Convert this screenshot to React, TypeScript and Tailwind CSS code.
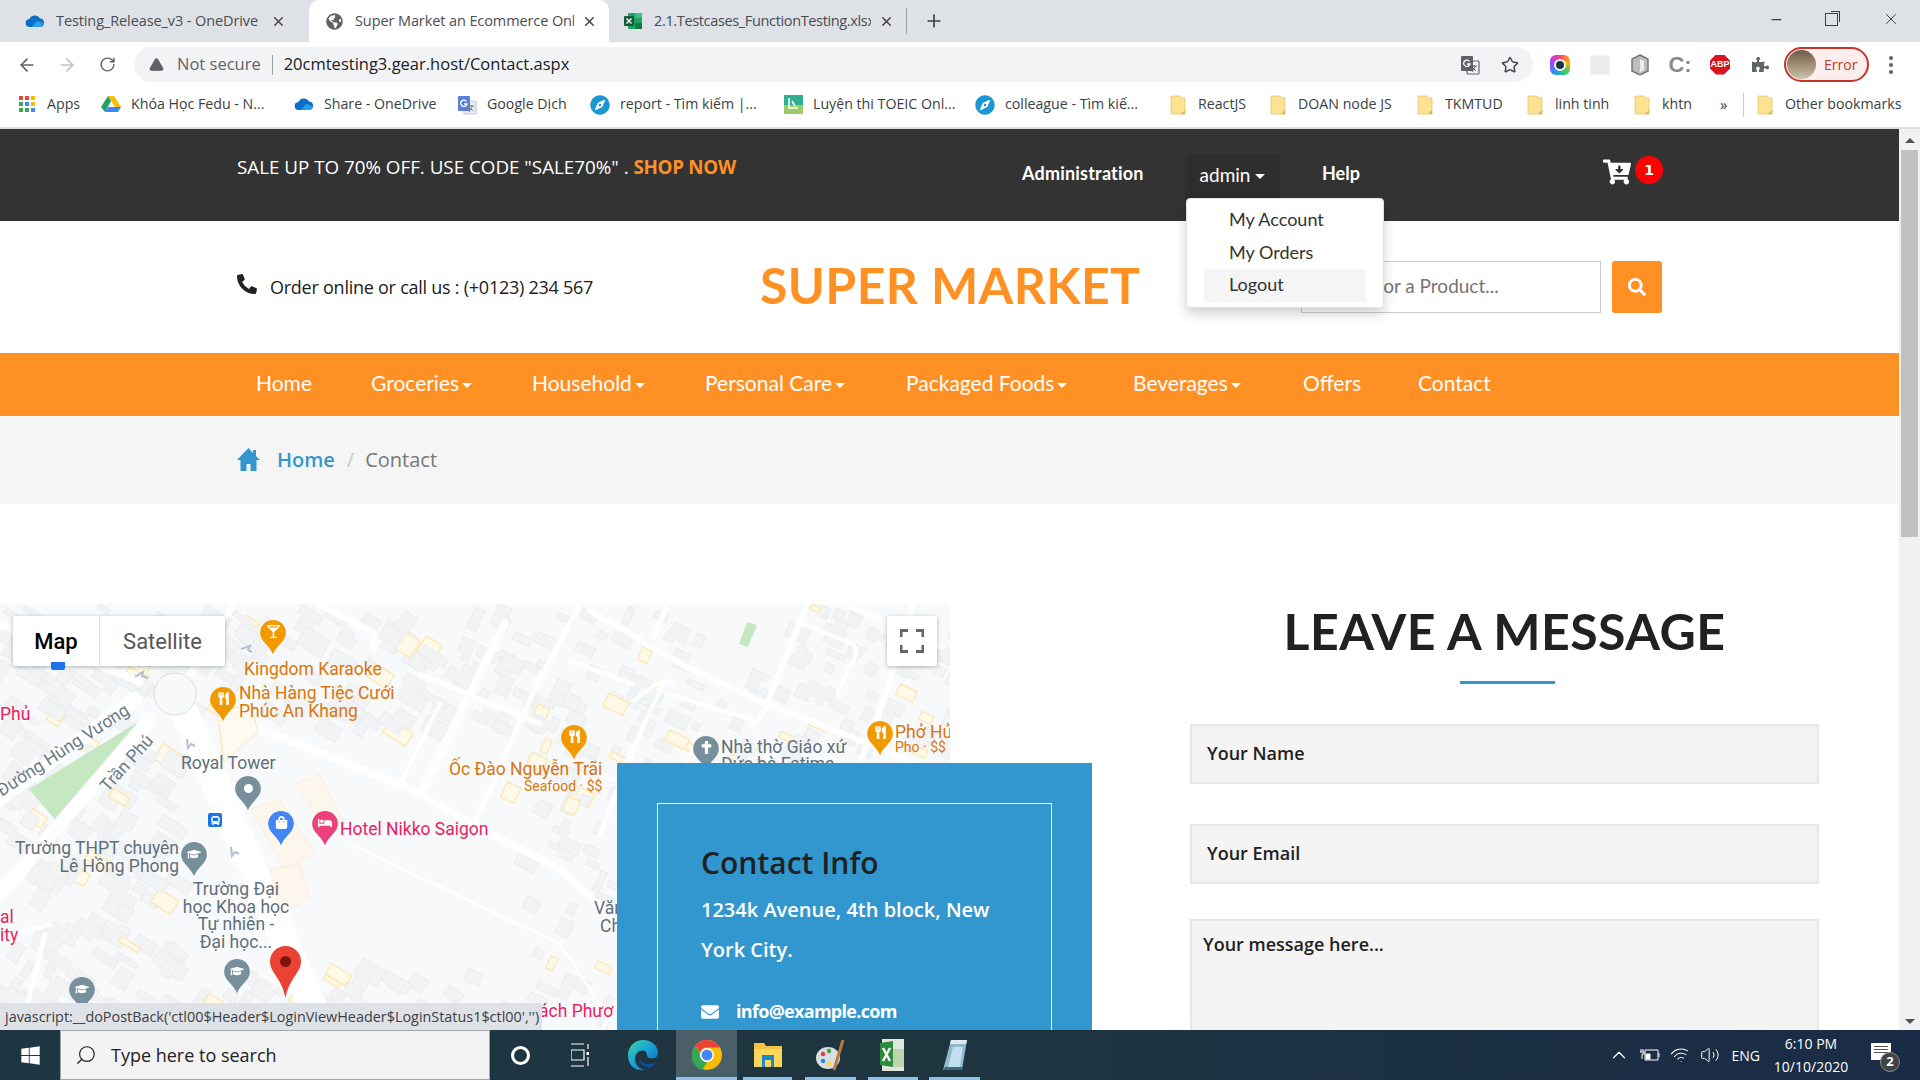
import React from "react";
import { ArrowLeft, ArrowRight, RotateCw, X, Plus, Star, Minus, AlertTriangle, ChevronUp, Search, Volume2, Wifi } from "lucide-react";
import { FaCartArrowDown, FaSearch, FaEnvelope, FaPuzzlePiece, FaWindows, FaGlobeAmericas, FaCompass, FaPhoneAlt, FaGraduationCap, FaUtensils, FaGlassMartiniAlt, FaBed, FaShoppingBag, FaCross, FaBus } from "react-icons/fa";

const Cloud = () => (
  <svg width="20" height="14" viewBox="0 0 20 14"><path d="M5 13a4 4 0 0 1-.6-8A6 6 0 0 1 15 4.500a4.300 4.300 0 0 1 .6 8.500z" fill="#0b6fc9" /><path d="M7 13l5-6 6 2a4 4 0 0 1-2.500 4z" fill="#2a9fe8" /></svg>
);
const Folder = () => (
  <svg width="16" height="20" viewBox="0 0 16 20"><path d="M1 1h9l1 2h4v16H1z" fill="#fde293" stroke="#e9c46a" strokeWidth="0.8" /><path d="M11 19l4-4v4z" fill="#e3b341" /></svg>
);
const Apps = () => (
  <svg width="16" height="16" viewBox="0 0 16 16">
    {["#ea4335","#ea4335","#fbbc04","#34a853","#4285f4","#fbbc04","#34a853","#34a853","#4285f4"].map((c, i) => (
      <rect key={i} x={(i % 3) * 6} y={Math.floor(i / 3) * 6} width="4" height="4" fill={c} />
    ))}
  </svg>
);
const Drive = () => (
  <svg width="20" height="18" viewBox="0 0 20 18"><path d="M7 1h6l7 11h-6z" fill="#fbbc04" /><path d="M7 1l3 5-6 11-4-5z" fill="#1fa463" /><path d="M4 17l3-5h13l-3 5z" fill="#4285f4" /></svg>
);
const Translate = ({ dark }: { dark?: boolean }) => (
  <svg width="20" height="20" viewBox="0 0 20 20"><rect x="7" y="6" width="12" height="13" rx="1" fill={dark ? "#f1f3f4" : "#e8eaed"} stroke={dark ? "#5f6368" : "#c7cbd1"} strokeWidth="1.200" /><rect x="1" y="1" width="12" height="15" rx="1" fill={dark ? "#5f6368" : "#5b7fd6"} /><path d="M9.500 6.500A3.200 3.200 0 1 0 10 9H7" stroke="#fff" strokeWidth="1.300" fill="none" /><path d="M11 11h6M14 10v1M12 17l3.500-6M13 13l3 3" stroke={dark ? "#5f6368" : "#7a7f87"} strokeWidth="1" fill="none" /></svg>
);
const Compass = () => <FaCompass className="text-[#1d97d4]" size={20} />;
const Toeic = () => (
  <svg width="19" height="19" viewBox="0 0 19 19"><rect width="19" height="19" fill="#2fb08f" /><rect y="10" width="19" height="9" fill="#9ccc65" /><path d="M5 3v10h9M8 6l3 5" stroke="#fff" strokeWidth="1.600" fill="none" /></svg>
);
const Excel = ({ s = 20 }: { s?: number }) => (
  <svg width={s} height={s} viewBox="0 0 20 20"><rect x="5" y="2" width="14" height="16" rx="1" fill="#21a366" /><rect x="12" y="2" width="7" height="5" fill="#33c481" /><rect x="12" y="12" width="7" height="6" fill="#107c41" /><rect x="1" y="5" width="10" height="10" rx="1" fill="#185c37" /><path d="M3.500 7.500l5 5M8.500 7.500l-5 5" stroke="#fff" strokeWidth="1.400" /></svg>
);
const ChromeLogo = ({ s = 30 }: { s?: number }) => (
  <svg width={s} height={s} viewBox="0 0 32 32"><circle cx="16" cy="16" r="16" fill="#fbbc04" /><path d="M16 0a16 16 0 0 1 13.900 8H16a8 8 0 0 0-7.500 5.200L3.600 5.800A16 16 0 0 1 16 0z" fill="#ea4335" /><path d="M3.600 5.800l7.300 12.600a6 6 0 0 0 5 5.600L11 32A16 16 0 0 1 3.600 5.800z" fill="#34a853" /><circle cx="16" cy="16" r="7.500" fill="#fff" /><circle cx="16" cy="16" r="5.800" fill="#4285f4" /></svg>
);
const EdgeLogo = () => (
  <svg width="32" height="32" viewBox="0 0 32 32"><defs><linearGradient id="eg" x1="0" y1="0" x2="1" y2="1"><stop offset="0" stopColor="#36d3a0" /><stop offset="0.500" stopColor="#1a9fd8" /><stop offset="1" stopColor="#0d5fb8" /></linearGradient></defs><path d="M16 1c9 0 15 6 15 13 0 5-5 6-9 5-3-1-1-5-4-7-4-2-10 1-10 8 0 5 4 10 10 11C8 33 1 26 1 16 1 8 7 1 16 1z" fill="url(#eg)" /><path d="M12 20c0 6 6 9 12 8 2-1 4-3 5-5-5 3-14 3-17-3z" fill="#0b4f9e" /></svg>
);
const Explorer = () => (
  <svg width="30" height="28" viewBox="0 0 30 28"><path d="M1 2h10l2 3h16v21H1z" fill="#f5c542" /><rect x="1" y="8" width="28" height="18" fill="#fbd75b" /><rect x="9" y="14" width="12" height="12" fill="#1e88c9" /><rect x="12" y="19" width="6" height="7" fill="#fbd75b" /></svg>
);
const Palette = () => (
  <svg width="32" height="34" viewBox="0 0 32 34"><ellipse cx="13" cy="20" rx="12" ry="11" fill="#d9dee3" /><circle cx="8" cy="16" r="2.200" fill="#e53935" /><circle cx="14" cy="13" r="2.200" fill="#43a047" /><circle cx="8" cy="23" r="2.200" fill="#1e88e5" /><circle cx="14" cy="26" r="2.200" fill="#fdd835" /><path d="M28 2l-9 30" stroke="#b8793a" strokeWidth="3" /></svg>
);
const ExcelOld = () => (
  <svg width="30" height="36" viewBox="0 0 30 36"><path d="M4 2h22v32H4z" fill="#dfe8d8" /><path d="M15 12h11v18H15z" fill="#bcd5ac" /><path d="M2 6l13-2v26l-13-2z" fill="#2e8b3d" /><path d="M5 11l7 13M12 11l-7 13" stroke="#fff" strokeWidth="2.400" /></svg>
);
const NoteApp = () => (
  <svg width="28" height="34" viewBox="0 0 28 34"><path d="M10 2h16l-5 30H2z" fill="#8fb9c9" /><path d="M10 2h16l-1 4H9z" fill="#dfe9ed" /><path d="M12 9h10l-3 20H7z" fill="#bfe0ec" /><path d="M2 32h19l1-3H4z" fill="#3f6b7d" /></svg>
);
const Pin = ({ color, children, s = 26 }: { color: string; children?: React.ReactNode; s?: number }) => (
  <div className="relative flex justify-center" style={{ width: s, height: s * 1.320 }}>
    <svg width={s} height={s * 1.320} viewBox="0 0 24 32" className="absolute left-0 top-0"><path d="M12 0a12 12 0 0 1 12 12c0 8-9 12-12 20C9 24 0 20 0 12A12 12 0 0 1 12 0z" fill={color} /></svg>
    <div className="relative mt-[5px] text-white text-[13px] leading-none">{children}</div>
  </div>
);

let seed = 11;
const rnd = () => { seed = (seed * 16807) % 2147483647; return seed / 2147483647; };
const buildings: { x: number; y: number; w: number; h: number; r: number; yellow: boolean }[] = [];
for (let i = 0; i < 1000; i++) {
  const x = rnd() * 960; const y = rnd() * 430;
  const right = x > 460;
  const w = 7 + rnd() * (right ? 16 : 22); const h = 5 + rnd() * (right ? 10 : 15);
  const yellow = rnd() < (x > 480 && y < 200 ? 0.16 : 0.08);
  if (x > 175 && x < 520 && y > 120 && y < 350) continue;
  if (x > 700 && x < 760 && y < 60) continue;
  if (y > 200 && x > 360 && rnd() < 0.6) continue;
  buildings.push({ x, y, w, h, r: right ? (rnd() < 0.3 ? 115 : 25) : 62 - 30, yellow });
}
const roads: [string, number][] = [
  ["M0 290L150 115", 14], ["M185 110L325 430", 28], ["M228 112L421 189L505 19", 8], ["M135 95L0 195", 14], ["M0 20L140 78", 8], ["M190 70L240 -10", 5],
  ["M300 -10L375 30L373 45", 7], ["M590 7L687 63L767 100L877 143L960 180", 6], ["M570 57L633 80", 5], ["M667 90L757 117", 4], ["M633 97L650 85Q660 75 672 78", 4], ["M627 157L663 80", 4],
  ["M580 0L553 50L530 95L470 230", 5], ["M667 3L653 33", 5], ["M803 20L853 40Q860 50 850 63L837 90", 4], ["M913 0L893 67L877 117L855 170", 6], ["M843 0L943 43", 5], ["M767 100L807 0", 6],
  ["M753 123L767 103", 4], ["M400 180L500 235L560 265L640 340L700 430", 7], ["M640 130L600 230", 5], ["M700 130L650 240", 4], ["M770 150L720 260", 4], ["M600 170L770 240", 4], ["M650 250L760 300", 4], ["M350 240L560 340L620 430", 2.500],
  ["M45 330L20 430", 5], ["M0 335L50 320", 5], ["M260 370L395 450", 3], ["M420 70L540 120", 5], ["M440 100L400 180", 4], ["M850 170L950 220", 4], ["M600 430L680 290", 4],
];
const MapBase = () => (
  <svg className="absolute inset-0" width="950" height="426" viewBox="0 0 950 426">
    <rect width="950" height="426" fill="#f8f9fa" />
    {buildings.map((b, i) => (
      <rect key={i} x={b.x} y={b.y} width={b.w} height={b.h} transform={`rotate(${b.r} ${b.x} ${b.y})`} fill={b.yellow ? "#fff9e8" : "#f1f3f4"} stroke={b.yellow ? "#fde5ae" : "#eceef0"} strokeWidth="1.200" />
    ))}
    <path d="M146 113L29 185L57 218L143 123z" fill="#c5e8c3" />
    <path d="M747 18L757 21L748 43L739 40z" fill="#c5e8c3" />
    {roads.map(([d, w], i) => <path key={i} d={d} stroke="#ffffff" strokeWidth={w} fill="none" strokeLinejoin="round" strokeLinecap="round" />)}
    <circle cx="175" cy="90" r="21" fill="#f8f9fa" stroke="#dadce0" strokeWidth="1" />
    <path d="M295 180l25-10l25 50l-18 8zM250 205l30-10l35 55l-30 15zM270 265l30-5l10 35l-30 15z" fill="#fdf6ec" stroke="#fbeeda" />
    <path d="M217 108l34-8l7 28l-34 30z" fill="#fffaf0" stroke="#fde5ae" />
    <path d="M135 73l8-5l-1 4l6 2M187 135l1 9l3-4l4 2M231 243l1 9l3-4l4 2M241 45l9-3l-2 4l4 2" stroke="#b3bcd6" strokeWidth="2" fill="none" />
  </svg>
);
const L = ({ c, className }: { c: string; className: string }) => <span className={`absolute whitespace-nowrap font-['Roboto',sans-serif] ${className}`}>{c}</span>;

const Bookmark = ({ icon, text, className }: { icon: React.ReactNode; text: string; className: string }) => (
  <div className={`flex items-center gap-[6px] shrink-0 ${className}`}>
    <span className="w-[20px] flex justify-center shrink-0">{icon}</span>
    <span className="whitespace-nowrap ml-[4px] -mt-[2px]">{text}</span>
  </div>
);
const Tab = ({ icon, text, active, className }: { icon: React.ReactNode; text: string; active?: boolean; className: string }) => (
  <div className={`h-[42px] flex items-center shrink-0 ${active ? "bg-white rounded-t-[10px]" : ""} ${className}`}>
    <span className="w-[20px] flex justify-center shrink-0">{icon}</span>
    <span className="ml-[11px] flex-1 overflow-hidden whitespace-nowrap text-[#4a4d52]">{text}</span>
    <X size={15} strokeWidth={2.400} className="ml-[8px] text-[#45474a] shrink-0" />
  </div>
);
const Ext = ({ children }: { children: React.ReactNode }) => <div className="w-[40px] flex justify-center items-center shrink-0">{children}</div>;
const NavItem = ({ t, caret, className }: { t: string; caret?: boolean; className: string }) => (
  <div className={`flex items-center whitespace-nowrap ${className}`}>
    {t}
    {caret && <span className="ml-[3px] mt-[4px] border-x-[5px] border-x-transparent border-t-[5px] border-t-white" />}
  </div>
);
const Tile = ({ children, on, className }: { children: React.ReactNode; on?: boolean; className: string }) => (
  <div className={`relative h-[50px] flex items-center justify-center shrink-0 ${on ? "bg-[#4a5f68]" : ""} ${className}`}>
    {children}
    <span className="absolute left-[0px] right-[0px] bottom-0 h-[3px] bg-[#8fc1e6]" />
  </div>
);

export default function App() {
  return (
    <div className="w-[1920px] h-[1080px] overflow-hidden flex flex-col bg-white font-['Open_Sans',sans-serif]">
      {/* tabs */}
      <div className="h-[42px] shrink-0 bg-[#dee1e6] flex text-[14.5px] tracking-[-0.1px]">
        <Tab className="w-[300px] pl-[25px] pr-[14px]" icon={<Cloud />} text="Testing_Release_v3 - OneDrive" />
        <Tab active className="w-[300px] ml-[9px] pl-[15px] pr-[12px]" icon={<FaGlobeAmericas size={17} className="text-[#5f6368]" />} text="Super Market an Ecommerce Onl" />
        <Tab className="w-[297px] pl-[14px] pr-[12px] tracking-[-0.35px]" icon={<Excel />} text="2.1.Testcases_FunctionTesting.xlsx" />
        <div className="w-px h-[26px] mt-[8px] bg-[#9aa0a6] mr-[17px]" />
        <Plus size={20} strokeWidth={2} className="mt-[11px] text-[#3c4043]" />
        <div className="ml-auto flex items-center text-[#3c4043] -mt-[4px]">
          <Minus size={15} className="mr-[41px]" />
          <div className="relative w-[13px] h-[13px] border border-[#3c4043] mr-[44px]"><span className="absolute -right-[3px] -top-[3px] w-[9px] h-[11px] border-t border-r border-[#3c4043]" /></div>
          <X size={18} strokeWidth={1.300} className="mr-[20px]" />
        </div>
      </div>
      {/* toolbar */}
      <div className="h-[42px] shrink-0 bg-white flex items-center pt-[3px]">
        <ArrowLeft size={20} className="ml-[17px] text-[#5f6368]" />
        <ArrowRight size={20} className="ml-[20px] text-[#bdc1c6]" />
        <RotateCw size={17} className="ml-[22px] text-[#5f6368]" />
        <div className="ml-[18px] w-[1399px] h-[35px] rounded-full bg-[#f1f3f4] flex items-center text-[16.5px]">
          <AlertTriangle size={15} fill="#5f6368" className="ml-[15px] text-[#5f6368]" />
          <span className="ml-[13px] text-[#5f6368]">Not secure</span>
          <span className="ml-[11px] w-px h-[20px] bg-[#9aa0a6]" />
          <span className="ml-[11px] text-[#202124]">20cmtesting3.gear.host/Contact.aspx</span>
          <span className="ml-auto flex"><Translate dark /></span>
          <Star size={18} className="ml-[21px] mr-[14px] text-[#45484b]" />
        </div>
        <div className="flex ml-[7px]">
          <Ext><div className="w-[20px] h-[20px] rounded-[6px] bg-[conic-gradient(#ff3d77,#ffb300,#2ecc71,#2196f3,#a044ff,#ff3d77)] flex items-center justify-center"><span className="w-[12px] h-[12px] rounded-full bg-[#22313f] border-2 border-white" /></div></Ext>
          <Ext><div className="w-[20px] h-[20px] bg-[#ececec] border border-[#f5f5f5]" /></Ext>
          <Ext><svg width="20" height="22" viewBox="0 0 20 22"><path d="M10 1l8 4v12l-8 4-8-4V5z" fill="#bdbdbd" stroke="#757575" strokeWidth="1.500" /><path d="M10 5l4 2v9l-4 2z" fill="#eee" /></svg></Ext>
          <Ext><span className="text-[22px] font-bold text-[#8a8a8a] leading-none font-['Liberation_Sans']">C:</span></Ext>
          <Ext><div className="w-[20px] h-[20px] bg-[#d8141e] [clip-path:polygon(30%_0,70%_0,100%_30%,100%_70%,70%_100%,30%_100%,0_70%,0_30%)] text-white text-[9px] font-bold flex items-center justify-center font-['Liberation_Sans']">ABP</div></Ext>
          <Ext><FaPuzzlePiece size={17} className="text-[#5f6368]" /></Ext>
        </div>
        <div className="ml-[4px] w-[85px] h-[35px] rounded-full border-2 border-[#c5352b] bg-[#fbeeec] flex items-center shrink-0">
          <span className="w-[29px] h-[29px] ml-[1px] rounded-full bg-[linear-gradient(#6e5a48,#a39277_55%,#c9c4ae)]" />
          <span className="ml-[8px] text-[14px] text-[#c5352b]">Error</span>
        </div>
        <div className="ml-[20px] flex flex-col gap-[3px]">
          <span className="w-[4px] h-[4px] rounded-full bg-[#5f6368]" /><span className="w-[4px] h-[4px] rounded-full bg-[#5f6368]" /><span className="w-[4px] h-[4px] rounded-full bg-[#5f6368]" />
        </div>
      </div>
      {/* bookmarks */}
      <div className="h-[45px] shrink-0 bg-white flex items-center pl-[17px] pb-[2px] text-[14.2px] text-[#3c4043] border-b-2 border-[#dadce0]">
        <Bookmark className="w-[84px]" icon={<Apps />} text="Apps" />
        <Bookmark className="w-[193px]" icon={<Drive />} text="Khóa Học Fedu - N..." />
        <Bookmark className="w-[163px]" icon={<Cloud />} text="Share - OneDrive" />
        <Bookmark className="w-[133px]" icon={<Translate />} text="Google Dịch" />
        <Bookmark className="w-[193px]" icon={<Compass />} text="report - Tìm kiếm |..." />
        <Bookmark className="w-[192px]" icon={<Toeic />} text="Luyện thi TOEIC Onl..." />
        <Bookmark className="w-[193px]" icon={<Compass />} text="colleague - Tìm kiế..." />
        <Bookmark className="w-[100px]" icon={<Folder />} text="ReactJS" />
        <Bookmark className="w-[147px]" icon={<Folder />} text="DOAN node JS" />
        <Bookmark className="w-[110px]" icon={<Folder />} text="TKMTUD" />
        <Bookmark className="w-[107px]" icon={<Folder />} text="linh tinh" />
        <Bookmark className="w-[88px]" icon={<Folder />} text="khtn" />
        <span className="w-[23px] text-[15px]">»</span>
        <span className="w-px h-[24px] bg-[#c8cacc] mr-[11px]" />
        <Bookmark icon={<Folder />} className="" text="Other bookmarks" />
      </div>
      {/* page */}
      <div className="relative flex-1 min-h-0 flex overflow-hidden">
        <div className="flex-1 min-w-0 overflow-hidden">
          <div className="h-[92px] bg-[#333333] flex items-start pl-[237px] text-white">
            <div className="mt-[24px] w-[785px] text-[18.8px]">SALE UP TO 70% OFF. USE CODE "SALE70%" . <span className="font-bold text-[#ff9024] tracking-[-0.3px]">SHOP NOW</span></div>
            <div className="mt-[31px] w-[163px] text-[18px] font-bold font-['Lato',sans-serif] tracking-[0.2px]">Administration</div>
            <div className="relative mt-[25px] w-[95px] h-[46px] bg-[#2e2e2e] rounded-t-[4px] flex items-center justify-center font-['Lato',sans-serif] text-[19px] pb-[4px]">
              admin<span className="ml-[5px] mt-[3px] border-x-[5px] border-x-transparent border-t-[5px] border-t-white" />
              <div className="absolute left-[1px] top-[44px] z-30 w-[198px] h-[110px] bg-white rounded-[4px] border border-[#e2e2e2] shadow-[0_6px_12px_rgba(0,0,0,0.18)] text-[#333] text-[18px] pt-[4px]">
                <div className="h-[33px] pl-[42px] flex items-center">My Account</div>
                <div className="h-[33px] pl-[42px] flex items-center">My Orders</div>
                <div className="ml-[17px] w-[162px] h-[33px] pl-[25px] bg-[#f5f5f5] flex items-center pb-[2px]">Logout</div>
              </div>
            </div>
            <div className="mt-[31px] ml-[42px] w-[281px] text-[18px] font-bold font-['Lato',sans-serif]">Help</div>
            <div className="mt-[29px] flex items-start"><FaCartArrowDown size={28} className="text-white" /><span className="ml-[4px] -mt-[2px] w-[28px] h-[28px] rounded-full bg-[#ff0000] text-white text-[14px] font-bold flex items-center justify-center font-['DejaVu_Sans']">1</span></div>
          </div>
          <div className="h-[132px] bg-white flex items-center pl-[237px] relative">
            <FaPhoneAlt size={20} className="text-[#222] -mt-[6px]" />
            <span className="ml-[13px] w-[490px] text-[18px] tracking-[-0.25px] text-[#212121]">Order online or call us : (+0123) 234 567</span>
            <span className="text-[50px] font-bold font-['Lato',sans-serif] text-[#ff9024] whitespace-nowrap w-[541px] tracking-[0.4px] -mt-[4px]">SUPER MARKET</span>
            <div className="w-[300px] h-[52px] border border-[#cccccc] text-[19px] text-[#757575] flex items-center pl-[14px] pb-[2px] font-['Lato',sans-serif] whitespace-nowrap">Search for a Product...</div>
            <div className="ml-[11px] w-[50px] h-[52px] rounded-[3px] bg-[#ff9024] flex items-center justify-center"><FaSearch size={18} className="text-white" /></div>
          </div>
          <div className="h-[63px] bg-[#ff9024] flex items-center text-white text-[21px] font-['Lato',sans-serif] pl-[256px] pb-[3px]">
            <NavItem className="w-[115px]" t="Home" />
            <NavItem className="w-[161px]" t="Groceries" caret />
            <NavItem className="w-[173px]" t="Household" caret />
            <NavItem className="w-[201px]" t="Personal Care" caret />
            <NavItem className="w-[227px]" t="Packaged Foods" caret />
            <NavItem className="w-[170px]" t="Beverages" caret />
            <NavItem className="w-[115px]" t="Offers" />
            <NavItem className="" t="Contact" />
          </div>
          <div className="h-[88px] bg-[#f5f5f5] flex items-center pl-[237px] text-[20px]">
            <svg width="23" height="25" viewBox="0 0 23 25" className="text-[#3297cf] -mt-[2px]"><path d="M11.500 1L0 13h3.500v11h6v-7h4v7h6V13H23L19 9V3h-3v3z" fill="currentColor" /></svg>
            <span className="ml-[17px] text-[#3297cf] font-semibold">Home</span>
            <span className="ml-[12px] text-[#c9c9c9]">/</span>
            <span className="ml-[11px] text-[#777]">Contact</span>
          </div>
          {/* content */}
          <div className="relative pt-[100px] flex">
            <div className="relative w-[950px] h-[426px] overflow-hidden shrink-0">
              <MapBase />
              <div className="absolute left-[13px] top-[12px] w-[212px] h-[50px] bg-white rounded-[2px] shadow-[0_1px_4px_rgba(0,0,0,0.3)] flex font-['Roboto',sans-serif] text-[22px]">
                <span className="w-[87px] flex items-center justify-center font-medium text-black border-r border-[#e6e6e6]">Map</span>
                <span className="flex-1 flex items-center justify-center text-[#565656]">Satellite</span>
              </div>
              <div className="absolute left-[887px] top-[12px] w-[50px] h-[50px] bg-white rounded-[2px] shadow-[0_1px_4px_rgba(0,0,0,0.3)] flex items-center justify-center">
                <svg width="24" height="24" viewBox="0 0 24 24" fill="none" stroke="#666" strokeWidth="3"><path d="M1 8V1.500h7M16 1.500h7V8M23 16v6.500h-7M8 22.500H1V16" /></svg>
              </div>
              <div className="absolute left-[260px] top-[16px]"><Pin color="#f29900"><FaGlassMartiniAlt size={13} /></Pin></div>
              <L c="Kingdom Karaoke" className="left-[244px] top-[52px] text-[17.5px] text-[#d9760e]" />
              <div className="absolute left-[210px] top-[83px]"><Pin color="#f29900"><FaUtensils size={13} /></Pin></div>
              <div className="absolute left-[239px] top-[80px] text-[17.5px] leading-[18px] text-[#d9760e] font-['Roboto',sans-serif] whitespace-nowrap">Nhà Hàng Tiệc Cưới<br />Phúc An Khang</div>
              <L c="Phủ" className="left-0 top-[97px] text-[17.5px] text-[#e91e63]" />
              <span className="absolute left-[-14px] top-[133px] -rotate-[33deg] whitespace-nowrap font-['Roboto',sans-serif] text-[17.5px] text-[#6b7a86]">Đường Hùng Vương</span>
              <span className="absolute left-[92px] top-[146px] -rotate-[48deg] whitespace-nowrap font-['Roboto',sans-serif] text-[17.5px] text-[#6b7a86]">Trần Phú</span>
              <L c="Royal Tower" className="left-[181px] top-[146px] text-[17.5px] text-[#5f6f7b]" />
              <div className="absolute left-[235px] top-[172px]"><Pin color="#78909c"><span className="block w-[9px] h-[9px] mt-[3px] rounded-full bg-white" /></Pin></div>
              <div className="absolute left-[268px] top-[207px]"><Pin color="#4285f4"><FaShoppingBag size={13} /></Pin></div>
              <div className="absolute left-[312px] top-[207px]"><Pin color="#ec407a"><FaBed size={14} /></Pin></div>
              <L c="Hotel Nikko Saigon" className="left-[340px] top-[212px] text-[17.5px] text-[#e91e63]" />
              <div className="absolute left-[208px] top-[209px] w-[14px] h-[14px] rounded-[2px] bg-[#1a73e8] text-white flex items-center justify-center"><FaBus size={9} /></div>
              <div className="absolute left-[51px] top-[58px] w-[14px] h-[8px] rounded-b-[2px] bg-[#1a73e8]" />
              <div className="absolute left-[14px] top-[235px] w-[165px] text-right text-[17.5px] leading-[18px] text-[#5f6f7b] font-['Roboto',sans-serif] whitespace-nowrap">Trường THPT chuyên<br />Lê Hồng Phong</div>
              <div className="absolute left-[181px] top-[238px]"><Pin color="#78909c"><FaGraduationCap size={14} /></Pin></div>
              <div className="absolute left-[176px] top-[277px] w-[120px] text-center text-[17.5px] leading-[17.600px] text-[#5f6f7b] font-['Roboto',sans-serif]">Trường Đại<br />học Khoa học<br />Tự nhiên -<br />Đại học...</div>
              <div className="absolute left-[224px] top-[355px]"><Pin color="#78909c"><FaGraduationCap size={14} /></Pin></div>
              <div className="absolute left-[69px] top-[373px]"><Pin color="#78909c"><FaGraduationCap size={14} /></Pin></div>
              <div className="absolute left-[270px] top-[342px]">
                <svg width="31" height="52" viewBox="0 0 31 52"><path d="M15.500 0A15.500 15.500 0 0 1 31 15.500C31 27 19 32 15.500 52 12 32 0 27 0 15.500A15.500 15.500 0 0 1 15.500 0z" fill="#ea4335" /><circle cx="15.500" cy="15.500" r="5.500" fill="#7a1510" /></svg>
              </div>
              <L c="al" className="left-0 top-[300px] text-[17.5px] text-[#e91e63]" />
              <L c="ity" className="left-0 top-[318px] text-[17.5px] text-[#e91e63]" />
              <L c="ách Phươ" className="left-[539px] top-[394px] text-[17.5px] text-[#e91e63]" />
              <L c="Ốc Đào Nguyễn Trãi" className="left-[449px] top-[152px] text-[17.5px] text-[#d9760e]" />
              <L c="Seafood · $$" className="left-[524px] top-[172px] text-[14px] text-[#d9760e]" />
              <div className="absolute left-[561px] top-[121px]"><Pin color="#f29900"><FaUtensils size={13} /></Pin></div>
              <div className="absolute left-[693px] top-[132px]"><Pin color="#78909c"><FaCross size={13} /></Pin></div>
              <L c="Nhà thờ Giáo xứ" className="left-[721px] top-[130px] text-[17.5px] text-[#5f6f7b]" />
              <L c="Đức bà Fatima" className="left-[721px] top-[147px] text-[17.5px] text-[#5f6f7b]" />
              <div className="absolute left-[867px] top-[117px]"><Pin color="#f29900"><FaUtensils size={13} /></Pin></div>
              <L c="Phở Hủ" className="left-[895px] top-[115px] text-[17.5px] text-[#d9760e]" />
              <L c="Pho · $$" className="left-[895px] top-[133px] text-[14px] text-[#d9760e]" />
              <L c="Văn" className="left-[594px] top-[291px] text-[17.5px] text-[#5f6f7b]" />
              <L c="Ch" className="left-[600px] top-[309px] text-[17.5px] text-[#5f6f7b]" />
            </div>
            <div className="absolute left-[617px] top-[259px] w-[475px] h-[400px] bg-[#3297cf] p-[40px]">
              <div className="w-[395px] h-[400px] border border-white pl-[43px] pt-[38px]">
                <div className="text-[30px] font-semibold text-[#212121] leading-[42px]">Contact Info</div>
                <div className="mt-[6px] text-[20px] font-semibold text-white leading-[40px] w-[300px]">1234k Avenue, 4th block, New York City.</div>
                <div className="mt-[28px] flex items-center text-white font-bold text-[18px]"><FaEnvelope size={18} /><span className="ml-[17px] tracking-[-0.7px]">info@example.com</span></div>
              </div>
            </div>
            <div className="ml-[240px] w-[629px] shrink-0">
              <div className="h-[54px] text-center text-[50px] leading-[54px] font-bold font-['Lato',sans-serif] text-[#212121] whitespace-nowrap tracking-[0.5px]">LEAVE A MESSAGE</div>
              <div className="mt-[23px] ml-[270px] w-[95px] h-[3px] bg-[#3297cf]" />
              <div className="mt-[40px] h-[60px] bg-[#f4f4f4] border-2 border-[#e6e6e6] flex items-center pl-[15px] pb-[2px] text-[18px] font-semibold text-[#212121]">Your Name</div>
              <div className="mt-[40px] h-[60px] bg-[#f4f4f4] border-2 border-[#e6e6e6] flex items-center pl-[15px] pb-[2px] text-[18px] font-semibold text-[#212121]">Your Email</div>
              <div className="mt-[35px] h-[160px] bg-[#f4f4f4] border-2 border-[#e6e6e6] pl-[11px] pt-[10px] text-[18px] font-semibold text-[#212121]">Your message here...</div>
            </div>
          </div>
        </div>
        {/* scrollbar */}
        <div className="w-[21px] shrink-0 bg-[#f1f1f1] flex flex-col items-center">
          <span className="mt-[9px] border-x-[5px] border-x-transparent border-b-[5px] border-b-[#505050]" />
          <span className="mt-[7px] w-[17px] h-[387px] bg-[#c1c1c1]" />
          <span className="mt-auto mb-[6px] border-x-[5px] border-x-transparent border-t-[5px] border-t-[#505050]" />
        </div>
        <div className="absolute left-0 bottom-0 w-[542px] h-[27px] z-20 bg-[#dee1e6] rounded-tr-[2px] pl-[5px] flex items-center text-[14.4px] text-[#3c4043] whitespace-nowrap">javascript:__doPostBack('ctl00$Header$LoginViewHeader$LoginStatus1$ctl00','')</div>
      </div>
      {/* taskbar */}
      <div className="h-[50px] shrink-0 bg-[linear-gradient(90deg,#1f3743,#1e3540_50%,#1a2b47)] flex items-center text-white">
        <div className="w-[60px] flex justify-center"><FaWindows size={21} /></div>
        <div className="w-[430px] h-[50px] bg-[#f3f3f3] flex items-center pl-[14px] text-[#222] text-[18px] border border-[#a0a6aa]">
          <Search size={22} strokeWidth={1.300} className="-scale-x-100" />
          <span className="ml-[14px]">Type here to search</span>
        </div>
        <div className="w-[60px] flex justify-center"><span className="w-[19px] h-[19px] rounded-full border-[3px] border-white" /></div>
        <div className="w-[60px] flex justify-center">
          <svg width="18" height="24" viewBox="0 0 18 24" fill="none" stroke="#fff" strokeWidth="1.200"><path d="M0 1h13M0 7h13v10H0zM0 23h13M17 1v5M17 14v9" /><rect x="15.500" y="9" width="3" height="3" fill="#fff" stroke="none" /></svg>
        </div>
        <div className="w-[66px] flex justify-center"><EdgeLogo /></div>
        <Tile on className="w-[61px]"><ChromeLogo /></Tile>
        <Tile className="w-[49px] ml-[6px]"><Explorer /></Tile>
        <Tile className="w-[51px] ml-[13px]"><Palette /></Tile>
        <Tile className="w-[50px] ml-[12px]"><ExcelOld /></Tile>
        <Tile className="w-[51px] ml-[11px]"><NoteApp /></Tile>
        <div className="ml-auto flex items-center">
          <ChevronUp size={22} strokeWidth={1.300} className="mr-[10px]" />
          <svg width="20" height="14" viewBox="0 0 20 14" fill="none" stroke="#fff"><path d="M5 2h13v10H5zM19 5v4" /><rect x="6" y="6" width="4" height="5" fill="#fff" /><path d="M3 1v3M1 1v3M0 4h4v2H2v5" /></svg>
          <Wifi size={20} strokeWidth={1.200} className="ml-[10px] -rotate-[10deg]" />
          <Volume2 size={20} strokeWidth={1.200} className="ml-[10px]" />
          <span className="ml-[12px] text-[14px]">ENG</span>
          <div className="ml-[13px] w-[76px] text-[14px] leading-[23px] text-center"><div>6:10 PM</div><div>10/10/2020</div></div>
          <div className="relative ml-[22px] mr-[29px] w-[20px] h-[17px] bg-white -mt-[8px] flex flex-col gap-[2px] pt-[3px] px-[3px]">
            <span className="h-px bg-[#555]" /><span className="h-px bg-[#555]" /><span className="h-px bg-[#555]" />
            <span className="absolute left-[9px] top-[9px] w-[20px] h-[20px] rounded-full bg-[#444] border border-[#888] text-white text-[13px] font-bold flex items-center justify-center">2</span>
          </div>
        </div>
      </div>
    </div>
  );
}
